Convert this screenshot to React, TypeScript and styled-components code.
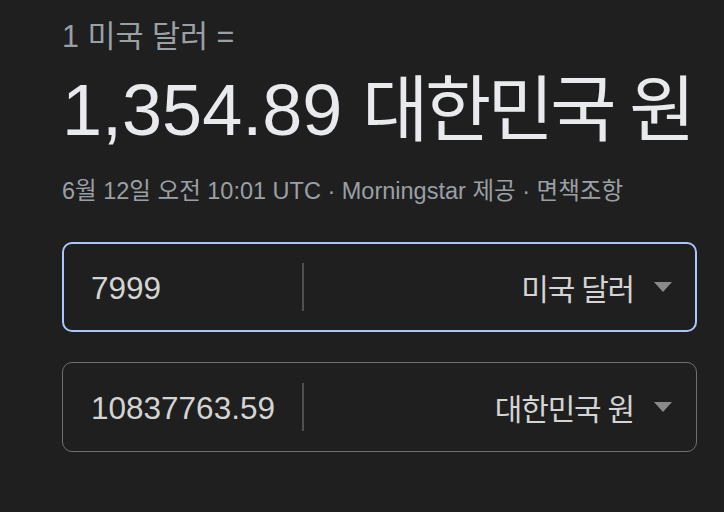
import React from "react";
import styled, { createGlobalStyle } from "styled-components";

const Global = createGlobalStyle`
  html, body {
    margin: 0;
    padding: 0;
    background: #1f1f1f;
  }
  body {
    font-family: "Liberation Sans", Arial, "Noto Sans CJK KR", sans-serif;
  }
`;

const Page = styled.div`
  width: 724px;
  height: 512px;
  box-sizing: border-box;
  padding: 18px 0 0 62px;
  background: #1f1f1f;
  overflow: hidden;
`;

const Column = styled.div`
  width: 635px;
  display: flex;
  flex-direction: column;
`;

const Header = styled.div`
  font-size: 30.5px;
  line-height: 36px;
  color: #9aa0a6;
  white-space: nowrap;
`;

const Big = styled.div`
  margin-top: 16px;
  font-size: 72px;
  line-height: 80px;
  color: #e8eaed;
  white-space: nowrap;
`;

const Ko = styled.span<{ $tight?: number }>`
  letter-spacing: ${(p) => p.$tight ?? -0.04}em;
`;

const Sub = styled.div`
  margin-top: 27px;
  font-size: 23.5px;
  line-height: 28px;
  color: #9aa0a6;
  white-space: nowrap;
`;

const Boxes = styled.div`
  margin-top: 37px;
  display: flex;
  flex-direction: column;
  gap: 30px;
`;

const Field = styled.div<{ $focused?: boolean }>`
  height: 90px;
  box-sizing: border-box;
  border-radius: 10px;
  border: ${(p) => (p.$focused ? "2px solid #a8c7fa" : "1px solid #6f6f6f")};
  padding: ${(p) => (p.$focused ? "0 23px 0 0" : "0 24px 0 1px")};
  display: flex;
  align-items: center;
`;

const Amount = styled.div`
  width: 211px;
  padding-left: 27px;
  padding-top: 2px;
  font-size: 31.5px;
  color: #d4d4d4;
  white-space: nowrap;
`;

const Divider = styled.div`
  width: 2px;
  height: 48px;
  background: #4f4f4f;
`;

const Currency = styled.div`
  flex: 1;
  display: flex;
  align-items: center;
  justify-content: flex-end;
  gap: 20px;
  font-size: 30px;
  color: #d4d4d4;
  white-space: nowrap;
`;

const Arrow = () => (
  <svg width="18" height="10" viewBox="0 0 18 10">
    <path d="M0 0H18L9 10Z" fill="#8a8a8a" />
  </svg>
);

export default function App() {
  return (
    <>
      <Global />
      <Page>
        <Column>
          <Header>1 미국 달러 =</Header>
          <Big>
            1,354.89 <Ko $tight={-0.05}>대한민국 원</Ko>
          </Big>
          <Sub>6월 12일 오전 10:01 UTC · Morningstar 제공 · 면책조항</Sub>
          <Boxes>
            <Field $focused>
              <Amount>7999</Amount>
              <Divider />
              <Currency>
                <Ko>미국 달러</Ko>
                <Arrow />
              </Currency>
            </Field>
            <Field>
              <Amount>10837763.59</Amount>
              <Divider />
              <Currency>
                <Ko>대한민국 원</Ko>
                <Arrow />
              </Currency>
            </Field>
          </Boxes>
        </Column>
      </Page>
    </>
  );
}
